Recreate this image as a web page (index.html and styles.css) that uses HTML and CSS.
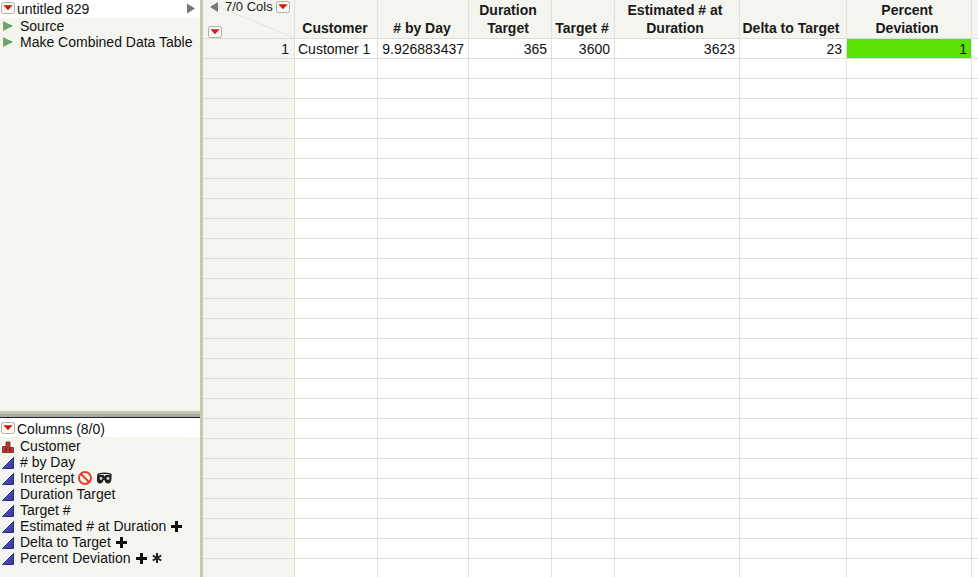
FILE: index.html
```html
<!DOCTYPE html>
<html lang="en">
<head>
<meta charset="utf-8">
<title>untitled 829</title>
<link rel="stylesheet" href="styles.css">
</head>
<body>
<div class="app">
  <svg class="defs" width="0" height="0" aria-hidden="true"><defs>
    <linearGradient id="g-play" x1="0" y1="0" x2="1" y2="0"><stop offset="0" stop-color="#8a9a6a"/><stop offset=".5" stop-color="#63ad70"/><stop offset="1" stop-color="#4e9560"/></linearGradient>
    <linearGradient id="g-tri" x1="0" y1="0" x2="1" y2="1"><stop offset="0" stop-color="#6a68c8"/><stop offset="1" stop-color="#34329a"/></linearGradient>
  </defs></svg>
  <aside class="side">
    <section class="pane-top">
      <div class="pane-head">
        <svg class="menu" viewBox="0 0 15 13"><rect x=".5" y=".5" width="14" height="12" rx="2" fill="#f8f7f3" stroke="#a9a79f"/><path d="M2.500 3.500h10L7.500 9z" fill="#d3180f"/></svg>
        <span class="pane-title">untitled 829</span>
        <svg class="collapse" viewBox="0 0 9 11"><path d="M0 0l9 5.500L0 11z" fill="#777"/></svg>
      </div>
      <ul class="list scripts">
        <li><svg class="play" viewBox="0 0 9 9"><path d="M0 0l9 4.500L0 9z" fill="url(#g-play)"/></svg>Source</li>
        <li><svg class="play" viewBox="0 0 9 9"><path d="M0 0l9 4.500L0 9z" fill="url(#g-play)"/></svg>Make Combined Data Table</li>
      </ul>
    </section>
    <div class="hsplit"></div>
    <section class="pane-bottom">
      <div class="pane-head cols-head">
        <svg class="menu" viewBox="0 0 15 13"><rect x=".5" y=".5" width="14" height="12" rx="2" fill="#f8f7f3" stroke="#a9a79f"/><path d="M2.500 3.500h10L7.500 9z" fill="#d3180f"/></svg>
        <span class="pane-title">Columns (8/0)</span>
      </div>
      <ul class="list columns">
        <li><svg class="type" viewBox="0 0 12 12"><path d="M.5 5.500h3.500v6H.5zM4 1h4v10.500H4zM8 6.500h3.500v5H8z" fill="#b53a34" stroke="#7d1f1c" stroke-width=".8"/></svg>Customer</li>
        <li><svg class="type" viewBox="0 0 12 12"><path d="M.5 11.500L11.500.5v11z" fill="url(#g-tri)" stroke="#2d2b85"/></svg># by Day</li>
        <li><svg class="type" viewBox="0 0 12 12"><path d="M.5 11.500L11.500.5v11z" fill="url(#g-tri)" stroke="#2d2b85"/></svg>Intercept
          <svg class="ban" viewBox="0 0 14 14"><circle cx="7" cy="7" r="6" fill="none" stroke="#e0402c" stroke-width="2"/><path d="M3 3l8 8" stroke="#e0402c" stroke-width="2"/></svg>
          <svg class="mask" viewBox="0 0 15 12"><path d="M.5 3C3 .8 12 .8 14.500 3" fill="none" stroke="#222" stroke-width="1.500"/><path d="M.5 3h6.200l.8 1.500L8.300 3h6.200v3.500c0 3-1.500 5-3.500 5-1.800 0-3.500-1.800-3.500-3.500-1 0-1 0-1 0 0 1.700-1.700 3.500-3.500 3.500-2 0-3.500-2-3.500-5z" fill="#222"/><circle cx="4" cy="6.500" r="1.400" fill="#d8d8d8"/><circle cx="11" cy="6.500" r="1.400" fill="#d8d8d8"/></svg></li>
        <li><svg class="type" viewBox="0 0 12 12"><path d="M.5 11.500L11.500.5v11z" fill="url(#g-tri)" stroke="#2d2b85"/></svg>Duration Target</li>
        <li><svg class="type" viewBox="0 0 12 12"><path d="M.5 11.500L11.500.5v11z" fill="url(#g-tri)" stroke="#2d2b85"/></svg>Target #</li>
        <li><svg class="type" viewBox="0 0 12 12"><path d="M.5 11.500L11.500.5v11z" fill="url(#g-tri)" stroke="#2d2b85"/></svg>Estimated # at Duration
          <svg class="plus" viewBox="0 0 11 11"><path d="M4 0h3v4h4v3H7v4H4V7H0V4h4z" fill="#111"/></svg></li>
        <li><svg class="type" viewBox="0 0 12 12"><path d="M.5 11.500L11.500.5v11z" fill="url(#g-tri)" stroke="#2d2b85"/></svg>Delta to Target
          <svg class="plus" viewBox="0 0 11 11"><path d="M4 0h3v4h4v3H7v4H4V7H0V4h4z" fill="#111"/></svg></li>
        <li><svg class="type" viewBox="0 0 12 12"><path d="M.5 11.500L11.500.5v11z" fill="url(#g-tri)" stroke="#2d2b85"/></svg>Percent Deviation
          <svg class="plus" viewBox="0 0 11 11"><path d="M4 0h3v4h4v3H7v4H4V7H0V4h4z" fill="#111"/></svg>
          <svg class="star" viewBox="0 0 10 10"><path d="M5 0v10M.700 2.500l8.600 5M.700 7.500l8.600-5" stroke="#222" stroke-width="2"/></svg></li>
      </ul>
    </section>
  </aside>
  <main class="grid-wrap">
    <table class="data">
      <colgroup>
        <col class="c-row"><col class="c-cust"><col class="c-day"><col class="c-dur"><col class="c-tgt"><col class="c-est"><col class="c-delta"><col class="c-pct"><col class="c-end">
      </colgroup>
      <thead>
        <tr>
          <th class="corner">
            <svg class="diag" viewBox="0 0 91 38"><path d="M7 3l84 35" stroke="#e3e3de" fill="none"/></svg>
            <div class="corner-top">
              <svg class="left" viewBox="0 0 8 10"><path d="M8 0L0 5l8 5z" fill="#777"/></svg>
              <span>7/0 Cols</span>
              <svg class="menu" viewBox="0 0 15 13"><rect x=".5" y=".5" width="14" height="12" rx="2" fill="#f8f7f3" stroke="#a9a79f"/><path d="M2.500 3.500h10L7.500 9z" fill="#d3180f"/></svg>
            </div>
            <svg class="menu corner-menu" viewBox="0 0 15 13"><rect x=".5" y=".5" width="14" height="12" rx="2" fill="#f8f7f3" stroke="#a9a79f"/><path d="M2.500 3.500h10L7.500 9z" fill="#d3180f"/></svg>
          </th>
          <th class="short">Customer</th><th class="short"># by Day</th><th>Duration<br>Target</th><th class="short">Target #</th><th>Estimated # at<br>Duration</th><th>Delta to Target</th><th>Percent<br>Deviation</th><th></th>
        </tr>
      </thead>
      <tbody>
        <tr><td class="rh">1</td><td class="txt">Customer 1</td><td class="num">9.926883437</td><td class="num">365</td><td class="num">3600</td><td class="num">3623</td><td class="num">23</td><td class="num hot">1</td><td class="end"></td></tr>
        <tr><td class="rh"></td><td></td><td></td><td></td><td></td><td></td><td></td><td></td><td class="end"></td></tr>
        <tr><td class="rh"></td><td></td><td></td><td></td><td></td><td></td><td></td><td></td><td class="end"></td></tr>
        <tr><td class="rh"></td><td></td><td></td><td></td><td></td><td></td><td></td><td></td><td class="end"></td></tr>
        <tr><td class="rh"></td><td></td><td></td><td></td><td></td><td></td><td></td><td></td><td class="end"></td></tr>
        <tr><td class="rh"></td><td></td><td></td><td></td><td></td><td></td><td></td><td></td><td class="end"></td></tr>
        <tr><td class="rh"></td><td></td><td></td><td></td><td></td><td></td><td></td><td></td><td class="end"></td></tr>
        <tr><td class="rh"></td><td></td><td></td><td></td><td></td><td></td><td></td><td></td><td class="end"></td></tr>
        <tr><td class="rh"></td><td></td><td></td><td></td><td></td><td></td><td></td><td></td><td class="end"></td></tr>
        <tr><td class="rh"></td><td></td><td></td><td></td><td></td><td></td><td></td><td></td><td class="end"></td></tr>
        <tr><td class="rh"></td><td></td><td></td><td></td><td></td><td></td><td></td><td></td><td class="end"></td></tr>
        <tr><td class="rh"></td><td></td><td></td><td></td><td></td><td></td><td></td><td></td><td class="end"></td></tr>
        <tr><td class="rh"></td><td></td><td></td><td></td><td></td><td></td><td></td><td></td><td class="end"></td></tr>
        <tr><td class="rh"></td><td></td><td></td><td></td><td></td><td></td><td></td><td></td><td class="end"></td></tr>
        <tr><td class="rh"></td><td></td><td></td><td></td><td></td><td></td><td></td><td></td><td class="end"></td></tr>
        <tr><td class="rh"></td><td></td><td></td><td></td><td></td><td></td><td></td><td></td><td class="end"></td></tr>
        <tr><td class="rh"></td><td></td><td></td><td></td><td></td><td></td><td></td><td></td><td class="end"></td></tr>
        <tr><td class="rh"></td><td></td><td></td><td></td><td></td><td></td><td></td><td></td><td class="end"></td></tr>
        <tr><td class="rh"></td><td></td><td></td><td></td><td></td><td></td><td></td><td></td><td class="end"></td></tr>
        <tr><td class="rh"></td><td></td><td></td><td></td><td></td><td></td><td></td><td></td><td class="end"></td></tr>
        <tr><td class="rh"></td><td></td><td></td><td></td><td></td><td></td><td></td><td></td><td class="end"></td></tr>
        <tr><td class="rh"></td><td></td><td></td><td></td><td></td><td></td><td></td><td></td><td class="end"></td></tr>
        <tr><td class="rh"></td><td></td><td></td><td></td><td></td><td></td><td></td><td></td><td class="end"></td></tr>
        <tr><td class="rh"></td><td></td><td></td><td></td><td></td><td></td><td></td><td></td><td class="end"></td></tr>
        <tr><td class="rh"></td><td></td><td></td><td></td><td></td><td></td><td></td><td></td><td class="end"></td></tr>
        <tr><td class="rh"></td><td></td><td></td><td></td><td></td><td></td><td></td><td></td><td class="end"></td></tr>
        <tr><td class="rh"></td><td></td><td></td><td></td><td></td><td></td><td></td><td></td><td class="end"></td></tr>
      </tbody>
    </table>
  </main>
</div>
</body>
</html>
```

FILE: styles.css
```css
* { box-sizing: border-box; }
html, body { margin: 0; height: 100%; overflow: hidden; }
body { font-family: "Liberation Sans", Arial, sans-serif; font-size: 14px; color: #111; background: #fff; }
.app { display: flex; width: 978px; height: 577px; overflow: hidden; }
.defs { position: absolute; }

.side { width: 203px; flex: none; display: flex; flex-direction: column; background: #f5f5f0; border-right: 3px solid #c8c8b2; }
.pane-top { height: 411px; flex: none; }
.hsplit { height: 7px; flex: none; background: #c8c8b2; border-bottom: 1px solid #222; box-shadow: inset 0 -3px 0 #a8a8a4; }
.pane-bottom { flex: 1; }

.pane-head { display: flex; align-items: center; height: 18px; background: #fff; position: relative; padding-left: 1px; }
.pane-top .menu { margin-top: -3px; }
.cols-head { height: 19px; }
.cols-head .pane-title { margin-top: 3px; }
.pane-title { margin-left: 2px; line-height: 18px; }
.menu { width: 14px; height: 12px; flex: none; display: block; }
.collapse { position: absolute; left: 187px; top: 3px; width: 8px; height: 11px; }

.list { list-style: none; margin: 0; padding: 0; }
.list li { display: flex; align-items: center; height: 16px; padding: 2px 0 0 20px; position: relative; white-space: nowrap; }
.list.scripts li { padding-top: 0; }
.play { position: absolute; left: 3px; top: 3px; width: 10px; height: 10px; }
.type { position: absolute; left: 2px; top: 4px; width: 12px; height: 12px; }
.ban { width: 14px; height: 14px; margin-left: 4px; }
.mask { width: 15px; height: 12px; margin-left: 5px; }
.plus { width: 11px; height: 11px; margin-left: 5px; }
.star { width: 10px; height: 10px; margin-left: 5px; }

.grid-wrap { flex: 1; min-width: 0; background: #fff; }
.data { border-collapse: separate; border-spacing: 0; table-layout: fixed; width: 775px; }
.c-row { width: 92px; } .c-cust { width: 83px; } .c-day { width: 91px; } .c-dur { width: 83px; }
.c-tgt { width: 63px; } .c-est { width: 125px; } .c-delta { width: 107px; } .c-pct { width: 125px; } .c-end { width: 6px; }

.data th { height: 39px; padding: 0 4px 1px 0; background: #f5f5f0; border-right: 1px solid #e0e0dc; border-bottom: 1px solid #dcdcd8; font-size: 14px; line-height: 18px; font-weight: bold; text-align: center; vertical-align: bottom; color: #1a1a1a; }
.data th.short { padding-right: 2px; }
.data th:last-child { border-right: 0; padding: 0; }
.data td { height: 20px; padding: 2px 4px 0 0; border-right: 1px solid #e0e0dc; border-bottom: 1px solid #dcdcd8; line-height: 17px; text-align: right; overflow: hidden; white-space: nowrap; }
.data td.end { border-right: 0; padding: 0; }
.data td.rh { background: #f5f5f0; padding-right: 5px; }
.data td.txt { text-align: left; padding: 2px 0 0 3px; }
.data td.hot { background: #5ae206; }

.data th.corner { position: relative; padding: 0; }
.diag { position: absolute; left: 0; top: 0; width: 91px; height: 38px; }
.corner-top { position: absolute; left: 7px; top: 0; display: flex; align-items: center; height: 14px; font-weight: normal; font-size: 13px; }
.left { width: 8px; height: 10px; margin-right: 7px; }
.corner-top span { margin-right: 3px; line-height: 14px; }
.corner-menu { position: absolute; left: 5px; top: 26px; }
```
